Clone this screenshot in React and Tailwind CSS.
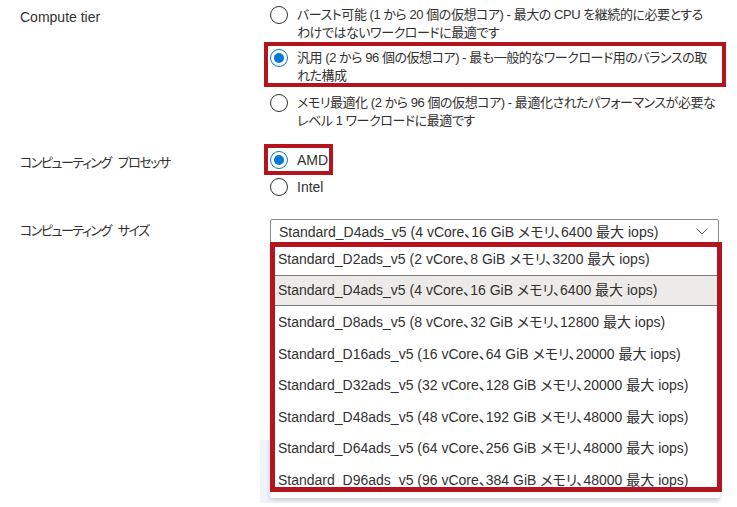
import React from "react";

const FONT = { fontFamily: "'Liberation Sans', 'Noto Sans CJK JP', sans-serif" };

function Radio({ checked }) {
  if (checked) {
    return (
      <span className="flex h-[18px] w-[18px] shrink-0 items-center justify-center rounded-full border border-[#0078d4] bg-white">
        <span className="h-[10px] w-[10px] rounded-full bg-[#0078d4]" />
      </span>
    );
  }
  return <span className="h-[18px] w-[18px] shrink-0 rounded-full border border-[#323130] bg-white" />;
}

function Option({ checked, children, small }) {
  return (
    <div className="flex gap-[9px]">
      <Radio checked={checked} />
      <div className={small ? "whitespace-nowrap text-[13px] tracking-[-0.45px]" : "whitespace-nowrap"}>
        {children}
      </div>
    </div>
  );
}

const sizes = [
  "Standard_D2ads_v5 (2 vCore、8 GiB メモリ、3200 最大 iops)",
  "Standard_D4ads_v5 (4 vCore、16 GiB メモリ、6400 最大 iops)",
  "Standard_D8ads_v5 (8 vCore、32 GiB メモリ、12800 最大 iops)",
  "Standard_D16ads_v5 (16 vCore、64 GiB メモリ、20000 最大 iops)",
  "Standard_D32ads_v5 (32 vCore、128 GiB メモリ、20000 最大 iops)",
  "Standard_D48ads_v5 (48 vCore、192 GiB メモリ、48000 最大 iops)",
  "Standard_D64ads_v5 (64 vCore、256 GiB メモリ、48000 最大 iops)",
  "Standard_D96ads_v5 (96 vCore、384 GiB メモリ、48000 最大 iops)",
];

export default function App() {
  return (
    <div
      className="relative h-[507px] w-[737px] overflow-hidden bg-white text-[14px] leading-[18px] text-[#323130] [font-feature-settings:'palt']"
      style={FONT}
    >
      {/* Row 1: Compute tier */}
      <div className="flex pt-[6px]">
        <div className="w-[270px] shrink-0 pl-[20px] pt-[2px]">Compute tier</div>
        <div className="flex flex-col">
          <Option small>
            バースト可能 (1 から 20 個の仮想コア) - 最大の CPU を継続的に必要とする
            <br />
            わけではないワークロードに最適です
          </Option>
          <div className="-ml-[6px] h-[45px] w-[462px] border-4 border-[#b4141e] pl-[2px] pt-[3px]">
            <Option checked small>
              汎用 (2 から 96 個の仮想コア) - 最も一般的なワークロード用のバランスの取
              <br />
              れた構成
            </Option>
          </div>
          <div className="mt-[7px]">
            <Option small>
              メモリ最適化 (2 から 96 個の仮想コア) - 最適化されたパフォーマンスが必要な
              <br />
              レベル 1 ワークロードに最適です
            </Option>
          </div>
        </div>
      </div>

      {/* Row 2: processor */}
      <div className="mt-[14px] flex">
        <div className="w-[270px] shrink-0 whitespace-nowrap pl-[20px] pt-[10px] text-[13px] tracking-[-1.5px] [word-spacing:5px]">
          コンピューティング プロセッサ
        </div>
        <div className="flex flex-col">
          <div className="-ml-[6px] h-[31px] w-[69px] border-4 border-[#b4141e] pl-[2px] pt-[3px]">
            <Option checked>AMD</Option>
          </div>
          <div className="mt-[3px]">
            <Option>Intel</Option>
          </div>
        </div>
      </div>

      {/* Row 3: size */}
      <div className="mt-[23px] flex">
        <div className="w-[270px] shrink-0 whitespace-nowrap pl-[20px] pt-[3px] text-[13px] tracking-[-1.5px] [word-spacing:5px]">
          コンピューティング サイズ
        </div>
        <div className="flex h-[25px] w-[449px] items-center justify-between rounded-[2px] border border-[#8a8886] pl-[8px] pr-[10px]">
          <span className="whitespace-nowrap">{sizes[1]}</span>
          <svg width="12" height="7" viewBox="0 0 12 7" fill="none">
            <path d="M0.5 0.5 L6 6 L11.5 0.5" stroke="#605e5c" strokeWidth="1" />
          </svg>
        </div>
      </div>

      {/* background panel behind the list */}
      <div className="absolute left-[260px] top-[440px] h-[63px] w-[460px] rounded-[2px] bg-[#eff4fc]" />

      {/* dropdown list */}
      <div className="absolute left-[270px] top-[243px] h-[255px] w-[450px] overflow-hidden rounded-b-[2px] bg-white shadow-[0_2px_4px_rgba(0,0,0,0.18)]">
        {sizes.map((s, i) => (
          <div
            key={s}
            className={
              i === 1
                ? "flex h-[31.6px] items-center whitespace-nowrap border-y border-[#7a7876] bg-[#edebe9] pl-[8px]"
                : "flex h-[31.6px] items-center whitespace-nowrap pl-[8px]"
            }
          >
            {s}
          </div>
        ))}
      </div>

      {/* annotation box */}
      <div className="absolute left-[270px] top-[242px] h-[250px] w-[452px] border-[5px] border-[#b4141e]" />
    </div>
  );
}
